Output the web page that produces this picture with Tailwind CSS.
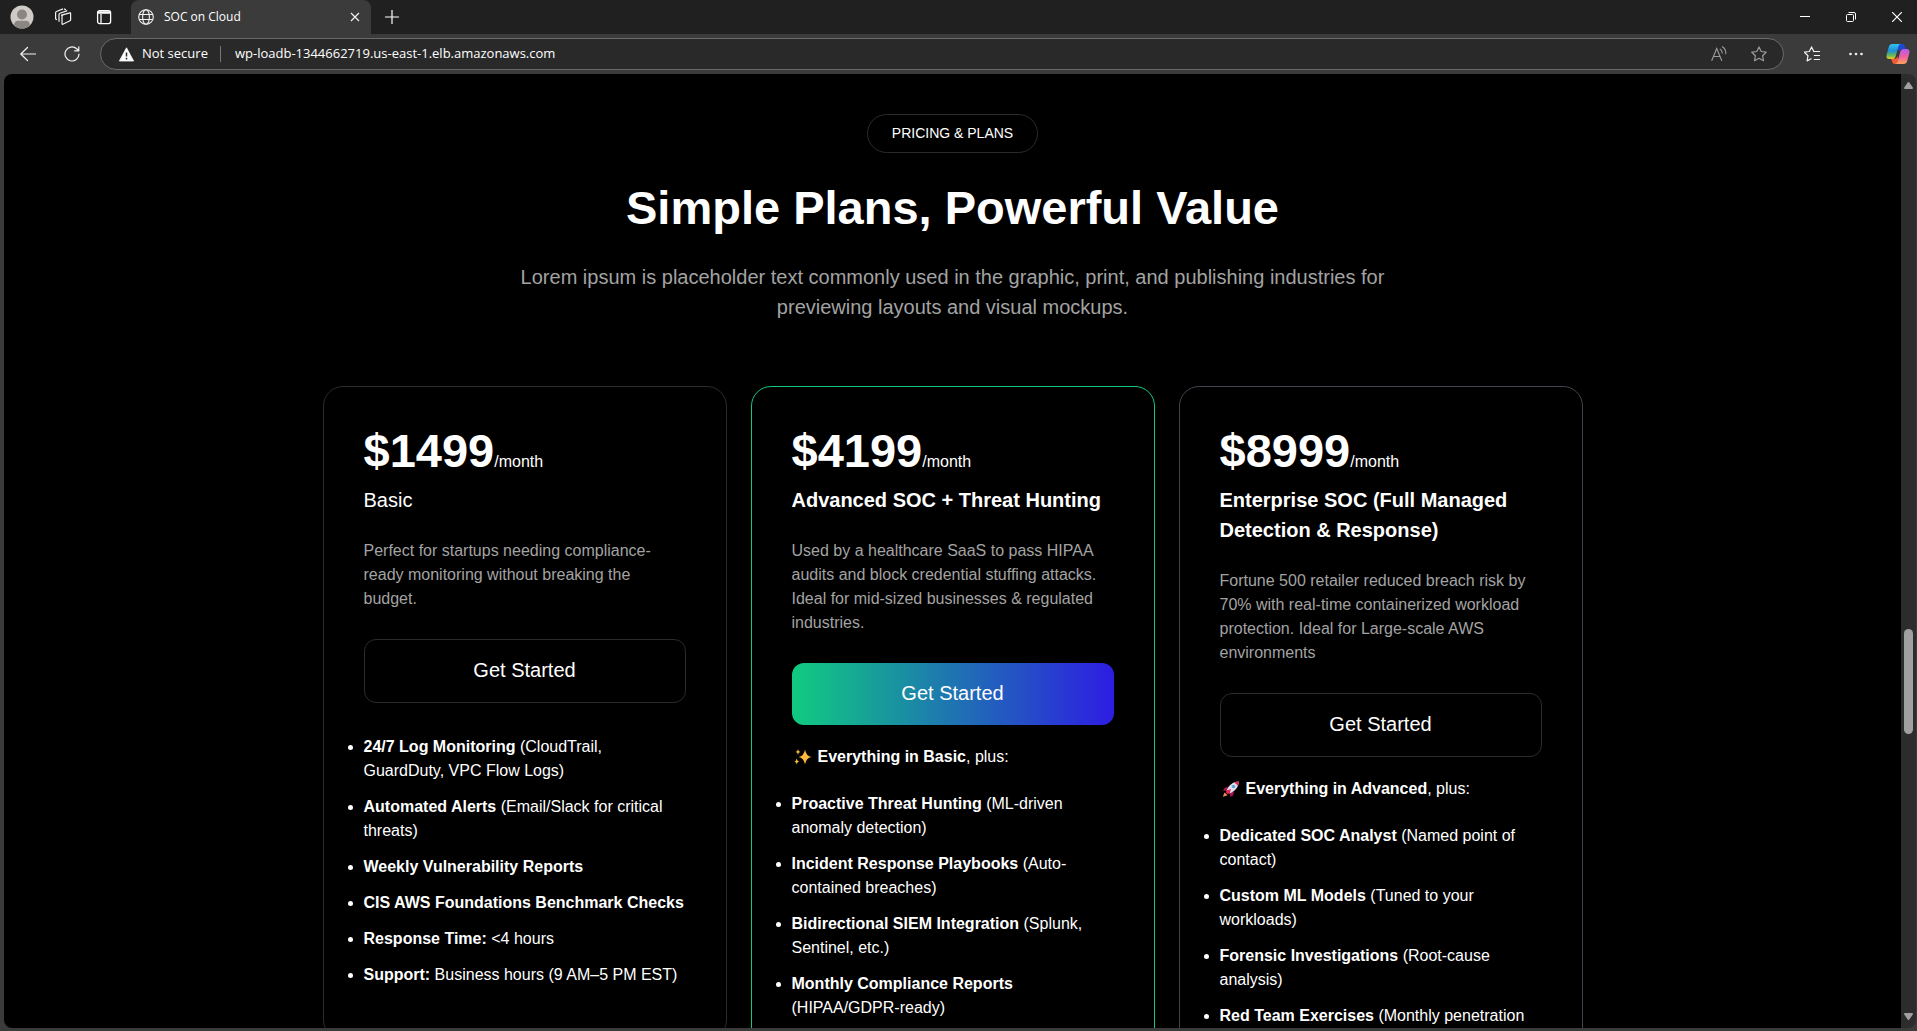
<!DOCTYPE html>
<html lang="en">
<head>
<meta charset="utf-8">
<title>SOC on Cloud</title>
<script src="https://cdn.jsdelivr.net/npm/@tailwindcss/browser@4"></script>
</head>
<body class="flex h-screen flex-col overflow-hidden bg-[#3b3b3b] font-['Open_Sans',sans-serif] text-white">

<!-- Tab strip -->
<header class="flex h-[34px] shrink-0 bg-[#202020]">
  <div class="flex w-[131px] items-center rounded-br-lg pl-[10px]">
    <button aria-label="Profile" class="mr-5">
      <svg class="size-6" viewBox="0 0 24 24"><circle cx="12" cy="12" r="11.5" fill="#cfccc8"/><circle cx="12" cy="9.5" r="5" fill="#8b8681"/><path d="M4 20.2c0-3 2-4.400 4-4.400h8c2 0 4 1.400 4 4.400a11.500 11.500 0 0 1-16 0z" fill="#8b8681"/></svg>
    </button>
    <button aria-label="Workspaces" class="mr-6">
      <svg class="size-[18px]" viewBox="0 0 18 18" fill="none" stroke="#f2f2f2" stroke-width="1.200" stroke-linejoin="round"><path d="M7.500 7.200 15.800 4.800q.8-.2.8.6v6.400q0 .7-.6.900l-7.200 3.600q-.8.300-.8-.5V8.500q0-1 .9-1.300z"/><path d="M5.600 13.500 5 13.200V6.600q0-1 .9-1.300l7.300-2.700"/><path d="M3 11.800 1.600 11V4.800q0-1 .9-1.300l6.500-2.600M10 .9l2 .8"/></svg>
    </button>
    <button aria-label="Tab actions">
      <svg class="size-4" viewBox="0 0 16 16" fill="none" stroke="#fff" stroke-width="1.300"><rect x="1.600" y="1.600" width="13" height="13" rx="2"/><path d="M1.600 3.500h13" stroke-width="2.500"/><path d="M5 5v9.500"/></svg>
    </button>
  </div>
  <div class="flex w-[240px] items-center rounded-t-lg bg-[#3b3b3b] px-[7px]">
    <svg class="size-4 shrink-0" viewBox="0 0 16 16" fill="none" stroke="#f2f2f2" stroke-width="1.100"><circle cx="8" cy="8" r="7.300"/><ellipse cx="8" cy="8" rx="3.400" ry="7.300"/><path d="M1.300 5.500h13.400M1.300 10.500h13.400"/></svg>
    <span class="ml-[10px] flex-1 text-xs">SOC on Cloud</span>
    <button aria-label="Close tab" class="p-1"><svg class="size-[10px]" viewBox="0 0 10 10" stroke="#f2f2f2" stroke-width="1.200"><path d="M1 1l8 8M9 1 1 9"/></svg></button>
  </div>
  <button aria-label="New tab" class="ml-[14px]"><svg class="size-[14px]" viewBox="0 0 14 14" stroke="#fff" stroke-width="1.200"><path d="M7 0v14M0 7h14"/></svg></button>
  <div class="ml-auto flex items-center gap-9 pr-[15px]">
    <button aria-label="Minimize"><svg class="size-[10px]" viewBox="0 0 10 10" stroke="#fff"><path d="M0 4.500h10"/></svg></button>
    <button aria-label="Restore"><svg class="size-[10px]" viewBox="0 0 10 10" fill="none" stroke="#fff"><rect x=".5" y="2.500" width="7" height="7" rx="1"/><path d="M2.500.5H8Q9.500.5 9.500 2v5.500"/></svg></button>
    <button aria-label="Close"><svg class="size-[10px]" viewBox="0 0 10 10" stroke="#fff" stroke-width="1.200"><path d="M0 0l10 10M10 0 0 10"/></svg></button>
  </div>
</header>

<!-- Toolbar -->
<div class="flex h-10 shrink-0 items-center pr-[7px] pl-5">
  <button aria-label="Back" class="mr-7"><svg class="size-4" viewBox="0 0 16 16" fill="none" stroke="#f2f2f2" stroke-width="1.200" stroke-linecap="round" stroke-linejoin="round"><path d="M7.500 1.500.8 8l6.700 6.500M1 8h14.500"/></svg></button>
  <button aria-label="Refresh" class="mr-5"><svg class="size-4" viewBox="0 0 16 16" fill="none" stroke="#f2f2f2" stroke-width="1.200" stroke-linecap="round" stroke-linejoin="round"><path d="M15 8a7 7 0 1 1-2.300-5.200L14.500 4.500M14.800.8v4H10.600"/></svg></button>
  <div class="flex h-8 flex-1 items-center rounded-full border border-[#6a6a6a] bg-[#292929] pr-4 pl-[18px] text-[13px]">
    <button class="flex items-center gap-2">
      <svg class="size-[15px]" viewBox="0 0 15 15"><path d="M7.500.8 14.600 14H.4z" fill="#fff" stroke="#fff" stroke-linejoin="round" stroke-width=".8"/><path d="M7.500 5.500v4M7.500 10.800v1.600" stroke="#292929" stroke-width="1.500"/></svg>
      Not secure
    </button>
    <span class="mr-[14px] ml-3 h-4 w-px bg-[#777]"></span>
    <input aria-label="Address" class="min-w-0 flex-1 bg-transparent outline-none" value="wp-loadb-1344662719.us-east-1.elb.amazonaws.com">
    <button aria-label="Read aloud" class="mr-6"><svg class="size-4" viewBox="0 0 16 16" fill="none" stroke="#9a9a9a" stroke-width="1.100" stroke-linecap="round"><path d="M.8 14.500 5.700 2.500l5 12M2.500 10.500h6.300M9.200 3.200c1.400.8 2 2.100 2 3.900M11.300.8c2.400 1.400 3.700 3.800 3.500 7"/></svg></button>
    <button aria-label="Add to favorites"><svg class="size-4" viewBox="0 0 16 16" fill="none" stroke="#9a9a9a" stroke-width="1.200" stroke-linejoin="round"><path d="M8 .9l2.200 4.600 5 .7-3.600 3.500.9 5L8 12.300l-4.500 2.400.9-5L.8 6.200l5-.7z"/></svg></button>
  </div>
  <button aria-label="Favorites" class="ml-5"><svg class="size-4" viewBox="0 0 16 16" fill="none" stroke="#f2f2f2" stroke-width="1.200" stroke-linejoin="round" stroke-linecap="round"><path d="M9.800 5.500 7.600.9 5.300 5.500.4 6.200l3.600 3.500-.9 5.200 4-2.100M9.800 5.500h5.700M10.300 9.500h5.200M10.300 13.500h5.200"/></svg></button>
  <button aria-label="Settings" class="ml-[29px]"><svg class="size-[14px]" viewBox="0 0 14 14" fill="#f2f2f2"><circle cx="1.500" cy="7" r="1.300"/><circle cx="7" cy="7" r="1.300"/><circle cx="12.500" cy="7" r="1.300"/></svg></button>
  <button aria-label="Copilot" class="ml-[23px]">
    <svg class="size-6" viewBox="0 0 24 24">
      <defs>
        <linearGradient id="cl" x1="0" y1="0" x2="0" y2="1"><stop offset="0" stop-color="#35c2f2"/><stop offset=".45" stop-color="#1f8fd8"/><stop offset=".75" stop-color="#5fb85a"/><stop offset="1" stop-color="#f2c81e"/></linearGradient>
        <linearGradient id="cr" x1="0" y1="0" x2="0" y2="1"><stop offset="0" stop-color="#b05cf0"/><stop offset=".5" stop-color="#ee5fa0"/><stop offset="1" stop-color="#ffa25c"/></linearGradient>
      </defs>
      <path d="M11 2h5c2 0 2.500 1.200 3 2.700l.8 2.300h-3.300c-2 0-3.300 1-3.800 3z" fill="#1c48d4"/>
      <path d="M13 22H9c-2 0-2.600-1.200-3-2.700L5.200 17H8c2 0 3-1 3.600-3z" fill="#f25a35"/>
      <path d="M6.200 2H15c-1.500 0-2.200 1-2.700 2.700l-2.600 9.500C9.100 16.200 8 17 6.300 17H3.300C.8 17 0 15.200.6 12.900L2.800 5C3.400 3 4.400 2 6.200 2z" fill="url(#cl)"/>
      <path d="M17.800 22H9c1.500 0 2.200-1 2.700-2.700l2.600-9.500C14.900 7.800 16 7 17.700 7h3c2.500 0 3.300 1.800 2.700 4.100L21.200 19c-.6 2-1.600 3-3.400 3z" fill="url(#cr)"/>
    </svg>
  </button>
</div>

<!-- Page viewport -->
<div class="mr-px mb-[3px] ml-1 flex min-h-0 flex-1 overflow-hidden rounded-lg">
  <main class="flex-1 overflow-hidden bg-black px-8 pt-10 font-['Liberation_Sans',Arial,sans-serif]">
    <div class="flex flex-col items-center text-center">
      <p class="rounded-[20px] border border-[#2b2b2b] px-6 py-2 text-sm leading-[21px]">PRICING &amp; PLANS</p>
      <h1 class="mt-[25px] text-[47px] leading-[60px] font-bold">Simple Plans, Powerful Value</h1>
      <p class="mt-6 max-w-[880px] text-xl leading-[30px] text-[#a3a3a3]">Lorem ipsum is placeholder text commonly used in the graphic, print, and publishing industries for previewing layouts and visual mockups.</p>
    </div>

    <div class="mx-auto mt-16 grid max-w-[1260px] grid-cols-3 items-start gap-6">

      <section class="rounded-[20px] border border-[#2b2b2b] p-10">
        <p class="flex items-baseline leading-6"><strong class="text-[47px] leading-[48px]">$1499</strong>/month</p>
        <h2 class="mt-[10px] text-xl leading-[30px]">Basic</h2>
        <p class="mt-6 leading-6 text-[#a3a3a3]">Perfect for startups needing compliance-ready monitoring without breaking the budget.</p>
        <button class="mt-7 block w-full rounded-xl border border-[#2b2b2b] pt-[17px] pb-[19px] text-xl leading-[26px]">Get Started</button>
        <ul class="mt-8 list-disc leading-6">
          <li class="mb-3"><strong>24/7 Log Monitoring</strong> (CloudTrail, GuardDuty, VPC Flow Logs)</li>
          <li class="mb-3"><strong>Automated Alerts</strong> (Email/Slack for critical threats)</li>
          <li class="mb-3"><strong>Weekly Vulnerability Reports</strong></li>
          <li class="mb-3"><strong>CIS AWS Foundations Benchmark Checks</strong></li>
          <li class="mb-3"><strong>Response Time:</strong> &lt;4 hours</li>
          <li class="mb-3"><strong>Support:</strong> Business hours (9 AM–5 PM EST)</li>
        </ul>
      </section>

      <section class="rounded-[20px] border border-[#13c980] p-10">
        <p class="flex items-baseline leading-6"><strong class="text-[47px] leading-[48px]">$4199</strong>/month</p>
        <h2 class="mt-[10px] text-xl leading-[30px] font-bold">Advanced SOC + Threat Hunting</h2>
        <p class="mt-6 leading-6 text-[#a3a3a3]">Used by a healthcare SaaS to pass HIPAA audits and block credential stuffing attacks. Ideal for mid-sized businesses &amp; regulated industries.</p>
        <button class="mt-7 block w-full rounded-xl bg-linear-to-r/srgb from-[#10cb80] to-[#2d1de3] pt-[17px] pb-[19px] text-xl leading-[26px]">Get Started</button>
        <div class="mt-5 flex items-center leading-6">
          <svg class="mr-[6px] ml-[2px] w-[18px]" viewBox="0 0 18 16" fill="#fdb93f"><path d="M11 .5Q12 7 17.500 8 12 9 11 15.500 10 9 4.500 8 10 7 11 .5z"/><path d="M4 .3q.4 2.300 2.300 2.700Q4.400 3.400 4 5.700 3.600 3.400 1.700 3 3.600 2.600 4 .3zM2.700 9.500q.4 2.500 2.500 3-2.100.5-2.500 3-.4-2.500-2.500-3 2.100-.5 2.500-3z"/></svg>
          <p><strong>Everything in Basic</strong>, plus:</p>
        </div>
        <ul class="mt-[23px] list-disc leading-6">
          <li class="mb-3"><strong>Proactive Threat Hunting</strong> (ML-driven anomaly detection)</li>
          <li class="mb-3"><strong>Incident Response Playbooks</strong> (Auto-contained breaches)</li>
          <li class="mb-3"><strong>Bidirectional SIEM Integration</strong> (Splunk, Sentinel, etc.)</li>
          <li class="mb-3"><strong>Monthly Compliance Reports</strong> (HIPAA/GDPR-ready)</li>
        </ul>
      </section>

      <section class="rounded-[20px] border border-[#45424f] p-10">
        <p class="flex items-baseline leading-6"><strong class="text-[47px] leading-[48px]">$8999</strong>/month</p>
        <h2 class="mt-[10px] text-xl leading-[30px] font-bold">Enterprise SOC (Full Managed Detection &amp; Response)</h2>
        <p class="mt-6 leading-6 text-[#a3a3a3]">Fortune 500 retailer reduced breach risk by 70% with real-time containerized workload protection. Ideal for Large-scale AWS environments</p>
        <button class="mt-7 block w-full rounded-xl border border-[#2b2b2b] pt-[17px] pb-[19px] text-xl leading-[26px]">Get Started</button>
        <div class="mt-5 flex items-center leading-6">
          <svg class="mr-[6px] ml-[2px] w-[18px]" viewBox="0 0 18 16"><path d="M6 5.500 2.500 7 1 10l3.500-.5zM12 10.500l-1 4-3 1.300.2-3.800z" fill="#b4134a"/><path d="M2.500 11.500.8 15.800l4.800-1.500z" fill="#f78a4b"/><path d="M4.500 9.500C6.500 4.500 11 .6 16.700.5c.3 5-3.500 9.500-9 12z" fill="#e4dfec"/><path d="M12.500 1.600C14 .8 15.500.5 16.700.5c0 1.500-.3 3-.9 4.200z" fill="#e0264f"/><path d="M4.500 9.500 9 8 7.700 12.500 5.500 13 4 11.500z" fill="#ec2456"/><circle cx="11.500" cy="5.500" r="1.800" fill="#5aa9d6"/></svg>
          <p><strong>Everything in Advanced</strong>, plus:</p>
        </div>
        <ul class="mt-[23px] list-disc leading-6">
          <li class="mb-3"><strong>Dedicated SOC Analyst</strong> (Named point of contact)</li>
          <li class="mb-3"><strong>Custom ML Models</strong> (Tuned to your workloads)</li>
          <li class="mb-3"><strong>Forensic Investigations</strong> (Root-cause analysis)</li>
          <li class="mb-3"><strong>Red Team Exercises</strong> (Monthly penetration tests)</li>
        </ul>
      </section>
    </div>
  </main>

  <!-- Scrollbar -->
  <div class="flex w-[15px] flex-col items-center bg-[#2c2c2c] py-2">
    <svg class="h-[7px] w-[9px]" viewBox="0 0 9 7" fill="#a0a0a0"><path d="M3.700.5q.8-1 1.600 0L8.800 5.500Q9.300 7 8 7H1Q-.3 7 .2 5.500z"/></svg>
    <div class="flex w-full flex-1 flex-col items-center">
      <div class="grow-[540]"></div>
      <div class="h-[105px] w-[9px] rounded-full bg-[#a0a0a0]"></div>
      <div class="grow-[279]"></div>
    </div>
    <svg class="h-[7px] w-[9px]" viewBox="0 0 9 7" fill="#a0a0a0"><path d="M3.700 6.500q.8 1 1.600 0L8.800 1.500Q9.300 0 8 0H1Q-.3 0 .2 1.500z"/></svg>
  </div>
</div>
</body>
</html>
